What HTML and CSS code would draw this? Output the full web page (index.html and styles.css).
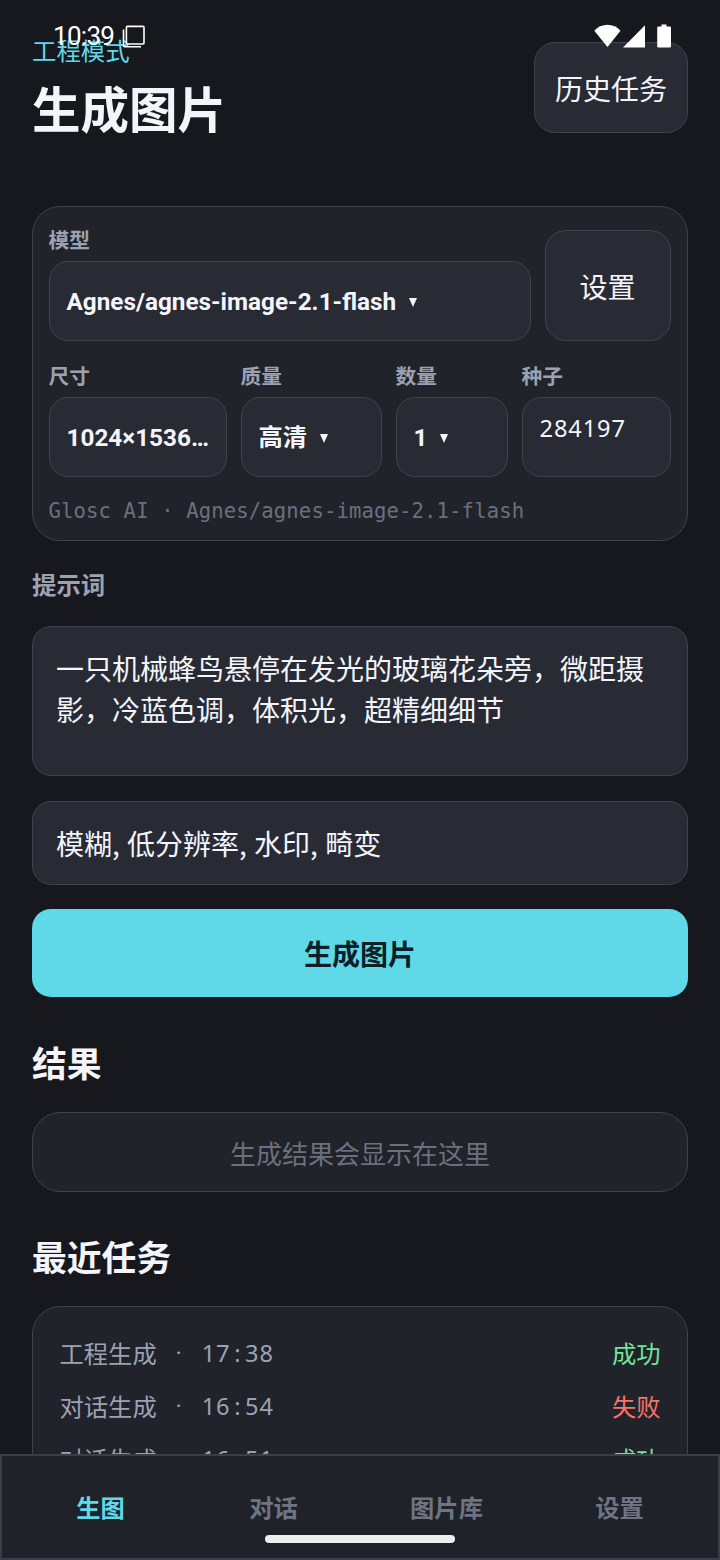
FILE: index.html
```html
<!DOCTYPE html>
<html lang="zh-CN">
<head>
<meta charset="utf-8">
<title>生成图片</title>
<link rel="stylesheet" href="styles.css">
</head>
<body>
<div class="screen">
  <div class="statusbar">
    <span class="clock">10:39</span>
    <svg class="copy-icon" width="24" height="24" viewBox="0 0 24 24" fill="none" stroke="#fff" stroke-width="1.6"><rect x="4.4" y="1.4" width="17.6" height="17.6" rx="1"/><path d="M1.5 4.5V20.5a1.2 1.2 0 0 0 1.2 1.2H19"/></svg>
    <svg class="system-icons" width="80" height="26" viewBox="0 0 80 26" fill="#fff"><path d="M0.300 7.700C7-0.300 20-0.300 26.500 7.700L13.500 24Z"/><path d="M51 2.300V24.600H29Z"/><path d="M67.500 1.400h5v2h3.200a1.300 1.300 0 0 1 1.300 1.300v18.600a1.300 1.300 0 0 1-1.300 1.300H64.500a1.300 1.300 0 0 1-1.300-1.300V4.700a1.300 1.300 0 0 1 1.300-1.300h3z"/></svg>
  </div>

  <main class="content">
    <header class="header">
      <div>
        <div class="eyebrow">工程模式</div>
        <h1 class="title">生成图片</h1>
      </div>
      <button class="button history">历史任务</button>
    </header>

    <section class="panel options">
      <div class="model-row">
        <div class="field">
          <div class="label">模型</div>
          <div class="select"><span>Agnes/agnes-image-2.1-flash</span><i class="caret"></i></div>
        </div>
        <button class="button">设置</button>
      </div>
      <div class="option-row">
        <div class="field"><div class="label">尺寸</div><div class="select"><span>1024×1536…</span></div></div>
        <div class="field"><div class="label">质量</div><div class="select"><span>高清</span><i class="caret"></i></div></div>
        <div class="field"><div class="label">数量</div><div class="select"><span>1</span><i class="caret"></i></div></div>
        <div class="field"><div class="label">种子</div><div class="select seed">284197</div></div>
      </div>
      <div class="provider">Glosc AI · Agnes/agnes-image-2.1-flash</div>
    </section>

    <div class="prompt-label">提示词</div>
    <div class="input prompt">一只机械蜂鸟悬停在发光的玻璃花朵旁，微距摄影，冷蓝色调，体积光，超精细细节</div>
    <div class="input negative">模糊, 低分辨率, 水印, 畸变</div>
    <button class="generate">生成图片</button>

    <h2 class="heading">结果</h2>
    <div class="panel empty">生成结果会显示在这里</div>

    <h2 class="heading">最近任务</h2>
    <section class="panel tasks">
      <div class="task"><span>工程生成</span><span class="dot">·</span><span class="time">17<b>:</b>38</span><span class="ok">成功</span></div>
      <div class="task"><span>对话生成</span><span class="dot">·</span><span class="time">16<b>:</b>54</span><span class="fail">失败</span></div>
      <div class="task"><span>对话生成</span><span class="dot">·</span><span class="time">16<b>:</b>51</span><span class="ok">成功</span></div>
    </section>
  </main>

  <nav class="tabs">
    <span class="tab active">生图</span>
    <span class="tab">对话</span>
    <span class="tab">图片库</span>
    <span class="tab">设置</span>
    <div class="home-indicator"></div>
  </nav>
</div>
</body>
</html>
```
FILE: styles.css
```css
* { box-sizing: border-box; }
body {
  margin: 0;
  background: #17181d;
  color: #f4f5fb;
  font-family: Roboto, "Noto Sans CJK SC", sans-serif;
}
.screen {
  position: relative;
  width: 720px;
  height: 1560px;
  overflow: hidden;
  display: flex;
  flex-direction: column;
}
.statusbar {
  position: absolute;
  z-index: 2;
  top: 23px;
  left: 53px;
  right: 46px;
  height: 26px;
  display: flex;
  align-items: center;
  color: #fff;
}
.clock { font-size: 26px; line-height: 26px; letter-spacing: -0.7px; width: 69px; }
.copy-icon { margin-top: 1px; }
.system-icons { margin-left: auto; }

.content { flex: 1; min-height: 0; overflow: hidden; padding: 0 32px; }
.header {
  display: flex;
  justify-content: space-between;
  align-items: flex-start;
  height: 206px;
  padding-top: 38px;
}
.eyebrow { font-size: 24.4px; line-height: 28px; color: #5fd8e8; }
.title { margin: 16px 0 0; font-size: 48.5px; line-height: 60px; font-weight: 700; }
.button {
  padding: 7px 0 0;
  border: 1.5px solid #40434e;
  border-radius: 21px;
  background: #282b34;
  color: inherit;
  font: 400 28px/34px Roboto, "Noto Sans CJK SC", sans-serif;
}
.history { width: 154px; height: 91px; margin-top: 3.5px; }

.panel { border: 1.5px solid #40434e; border-radius: 28px; background: #20232a; }
.options { height: 335px; padding: 22.5px 15.5px 0; }
.model-row { display: grid; grid-template-columns: 482px 126px; gap: 14px; height: 111px; }
.option-row { display: grid; grid-template-columns: 178px 141px 112px 149px; gap: 14px; margin-top: 25px; }
.label { height: 31px; padding: 2px 0 0; font-size: 20.7px; line-height: 18px; font-weight: 700; color: #9da2b2; }
.select {
  display: flex;
  align-items: center;
  height: 80px;
  padding: 2px 16px 0 17px;
  border: 1.5px solid #40434e;
  border-radius: 19px;
  background: #282b34;
  font-size: 24.3px;
  font-weight: 700;
  line-height: 30px;
  white-space: nowrap;
}
.caret {
  margin: 1px 0 0 12.5px;
  border: 4.8px solid transparent;
  border-top: 9px solid #f4f5fb;
  border-bottom: 0;
}
.seed {
  align-items: flex-start;
  padding-top: 15px;
  font-family: "Noto Sans", sans-serif;
  font-size: 23.6px;
  font-weight: 400;
  letter-spacing: 0.9px;
}
.provider {
  margin-top: 19px;
  font: 20.6px/30px "DejaVu Sans Mono", monospace;
  letter-spacing: 0.12px;
  color: #6c707e;
}

.prompt-label { margin-top: 31px; font-size: 24.4px; line-height: 28px; font-weight: 700; color: #9da2b2; }
.input {
  padding: 23px 23px 0;
  border: 1.5px solid #40434e;
  border-radius: 19px;
  background: #282b34;
  font-size: 28px;
  line-height: 41px;
}
.prompt { height: 150px; margin-top: 26px; }
.negative { height: 84px; margin-top: 25px; padding-top: 21px; font-family: "Noto Sans CJK SC", sans-serif; word-spacing: 1px; }
.generate {
  display: block;
  width: 100%;
  height: 88px;
  margin-top: 24px;
  padding: 6px 0 0;
  border: 0;
  border-radius: 19px;
  background: #5fd8e8;
  color: #0c2026;
  font: 700 28px/34px Roboto, "Noto Sans CJK SC", sans-serif;
}
.heading { margin: 46px 0 0; font-size: 34.8px; line-height: 44px; font-weight: 700; }
.empty {
  display: flex;
  align-items: center;
  justify-content: center;
  height: 80px;
  margin-top: 25px;
  font-size: 26px;
  color: #6c707e;
}
.empty + .heading { margin-top: 45px; }
.tasks { height: 260px; margin-top: 25px; padding: 19px 26.5px; }
.task { display: flex; align-items: center; height: 53.2px; font-size: 24.3px; color: #9da2b2; }
.dot { width: 44px; text-align: center; }
.time { padding: 0 0 0 1px; font-family: "Noto Sans", sans-serif; font-size: 23.6px; letter-spacing: 0.9px; }
.time b { display: inline-block; width: 14.6px; font-weight: 400; text-align: center; }
.ok, .fail { margin-left: auto; }
.ok { color: #72e39b; }
.fail { color: #f8736a; }

.tabs {
  position: relative;
  display: grid;
  grid-template-columns: repeat(4, 1fr);
  flex: none;
  height: 106px;
  padding: 0 12px;
  border: 2px solid #3b3e49;
  background: #1f2229;
  text-align: center;
  font-size: 24.3px;
  line-height: 106px;
  font-weight: 700;
  color: #6f7482;
}
.active { color: #5fd8e8; }
.home-indicator {
  position: absolute;
  left: 263px;
  top: 79px;
  width: 190px;
  height: 8px;
  border-radius: 4px;
  background: #ededed;
}
```
